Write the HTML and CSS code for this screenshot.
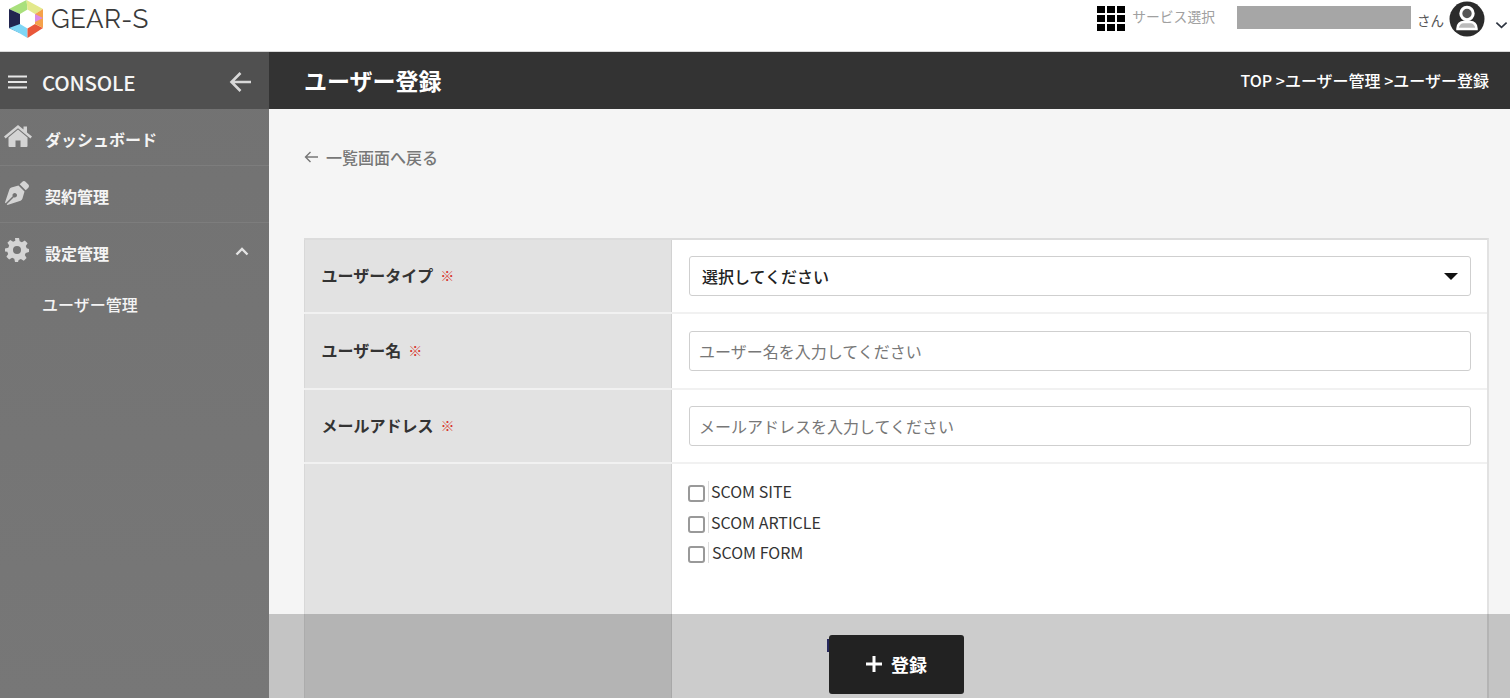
FILE: index.html
```html
<!DOCTYPE html>
<html lang="ja">
<head>
<meta charset="utf-8">
<title>ユーザー登録</title>
<link rel="stylesheet" href="styles.css">
</head>
<body>
<header class="topbar">
  <div class="brand">
    <svg class="logo" viewBox="0 0 35 38" width="35" height="38">
      <polygon points="0,9 17.500,0 18.500,9.500 11,14" fill="#a9e07c"/>
      <polygon points="17.500,0 34,9 26,14 18.500,9.500" fill="#e3e98c"/>
      <polygon points="0,9 11,14 11,33 0,28" fill="#22254f"/>
      <polygon points="11,24 18.500,28.500 18.500,38 11,33.500 0,28" fill="#7fd6f5"/>
      <polygon points="18.500,28.500 26,24 34,28 18.500,38" fill="#e9573a"/>
      <polygon points="26,14 34,9 34,28 26,24" fill="#f5a14a"/>
      <polygon points="26,14 34,18 26,22" fill="#d98ae8"/>
    </svg>
    <span class="brand-name">GEAR-S</span>
  </div>
  <div class="account">
    <div class="service">
      <svg class="grid-icon" viewBox="0 0 29 25" width="29" height="25" fill="#000">
        <rect x="0" y="0" width="8" height="7"/><rect x="10" y="0" width="8" height="7"/><rect x="20" y="0" width="8" height="7"/>
        <rect x="0" y="9" width="8" height="7"/><rect x="10" y="9" width="8" height="7"/><rect x="20" y="9" width="8" height="7"/>
        <rect x="0" y="18" width="8" height="7"/><rect x="10" y="18" width="8" height="7"/><rect x="20" y="18" width="8" height="7"/>
      </svg>
      <span class="service-label">サービス選択</span>
    </div>
    <div class="user-mask"></div>
    <span class="san">さん</span>
    <svg class="avatar" viewBox="0 0 36 36" width="36" height="36">
      <circle cx="18" cy="18" r="17.500" fill="#2b2b2b"/>
      <circle cx="18" cy="12.500" r="6.200" fill="#555" stroke="#fff" stroke-width="3"/>
      <path d="M8.500 27.500c0-4 3-6.500 6-6.500h7c3 0 6 2.500 6 6.500v.5h-19z" fill="#bbb" stroke="#fff" stroke-width="2.500"/>
    </svg>
    <svg class="caret" viewBox="0 0 14 8" width="13" height="8"><path d="M1.500 1.500 7 6.500l5.500-5" fill="none" stroke="#2d3440" stroke-width="1.800"/></svg>
  </div>
</header>

<div class="shell">
  <aside class="sidebar">
    <div class="console">
      <svg class="burger" viewBox="0 0 20 14" width="20" height="14"><path d="M0 1.500h19M0 7h19M0 12.500h19" stroke="#e6e6e6" stroke-width="2"/></svg>
      <span class="console-label">CONSOLE</span>
      <svg class="back" viewBox="0 0 24 22" width="24" height="22"><path d="M22 11H3M11.500 2 2.500 11l9 9" fill="none" stroke="#d8d8d8" stroke-width="2.600"/></svg>
    </div>
    <nav class="nav">
      <div class="nav-item">
        <svg class="nav-icon" viewBox="0 0 28 22" width="28" height="22" fill="#d4d4d4"><path d="M14 4.500 4.500 12.500V21a1 1 0 0 0 1 1h6v-6.500h5V22h6a1 1 0 0 0 1-1v-8.500z"/><path d="M14 0 0 11.500l1.600 2L14 3.200l12.400 10.300 1.600-2-5-4.100V1.500h-3.500v3z"/></svg>
        <span>ダッシュボード</span>
      </div>
      <div class="nav-item">
        <svg class="nav-icon pen" viewBox="0 0 512 512" width="24" height="24" fill="#d4d4d4"><path d="M136.600 138.790a64.003 64.003 0 0 0-43.310 41.350L0 460l14.690 14.690L164.800 324.580c-2.990-6.260-4.800-13.180-4.800-20.580 0-26.510 21.490-48 48-48s48 21.490 48 48-21.490 48-48 48c-7.400 0-14.320-1.810-20.580-4.800L37.310 497.310 52 512l279.860-93.290a64.003 64.003 0 0 0 41.350-43.310L416 224 288 96l-151.400 42.790zm361.340-64.620l-60.110-60.110c-18.750-18.750-49.160-18.750-67.910 0l-56.550 56.550 128.020 128.020 56.550-56.550c18.750-18.750 18.750-49.150 0-67.910z"/></svg>
        <span>契約管理</span>
      </div>
      <div class="nav-item nav-open">
        <svg class="nav-icon gear" viewBox="0 0 24 24" width="24" height="24" fill="#d4d4d4"><path fill-rule="evenodd" d="M10 0h4l.7 3.300 2.200.9L19.800 2.400l2.800 2.800-1.800 2.900.9 2.200L24 11v3l-3.300.9-.9 2.200 1.800 2.900-2.800 2.800-2.900-1.800-2.200.9L13 24h-3l-.7-3.300-2.200-.9-2.900 1.800-2.800-2.800 1.800-2.900-.9-2.200L0 13.500v-3l3.300-.7.9-2.200-1.800-2.900 2.800-2.800 2.900 1.800 2.200-.9zM12 8a4 4 0 1 0 0 8 4 4 0 0 0 0-8z"/></svg>
        <span>設定管理</span>
        <svg class="chev" viewBox="0 0 14 9" width="14" height="9"><path d="M1.500 7.500 7 2l5.500 5.500" fill="none" stroke="#e4e4e4" stroke-width="2.400"/></svg>
      </div>
      <div class="nav-sub">ユーザー管理</div>
    </nav>
  </aside>

  <main class="main">
    <div class="title-bar">
      <h1>ユーザー登録</h1>
      <div class="crumbs">TOP &gt;ユーザー管理 &gt;ユーザー登録</div>
    </div>
    <div class="content">
      <a class="back-link">
        <svg viewBox="0 0 14 12" width="14" height="12"><path d="M14 6H1.500M6.500 1 1.500 6l5 5" fill="none" stroke="#777" stroke-width="1.400"/></svg>
        一覧画面へ戻る
      </a>
      <div class="form">
        <div class="row row-type">
          <div class="label">ユーザータイプ<span class="req">※</span></div>
          <div class="field">
            <div class="select"><span>選択してください</span><i class="tri"></i></div>
          </div>
        </div>
        <div class="row row-name">
          <div class="label">ユーザー名<span class="req">※</span></div>
          <div class="field"><input class="input" placeholder="ユーザー名を入力してください"></div>
        </div>
        <div class="row row-mail">
          <div class="label">メールアドレス<span class="req">※</span></div>
          <div class="field"><input class="input" placeholder="メールアドレスを入力してください"></div>
        </div>
        <div class="row row-perm">
          <div class="label"></div>
          <div class="field checks">
            <label class="check"><i class="box"></i><span>SCOM SITE</span></label>
            <label class="check"><i class="box"></i><span>SCOM ARTICLE</span></label>
            <label class="check"><i class="box"></i><span class="shift">SCOM FORM</span></label>
          </div>
        </div>
      </div>
    </div>
    <div class="action-bar">
      <button class="submit">
        <svg class="plus" viewBox="0 0 16 16" width="16" height="16"><path d="M8 0v16M0 8h16" stroke="#fff" stroke-width="3"/></svg>
        <span>登録</span>
      </button>
    </div>
  </main>
</div>
</body>
</html>
```
FILE: styles.css
```css
* { box-sizing: border-box; }
html, body { margin: 0; height: 100%; overflow: hidden; }
body {
  font-family: "Noto Sans CJK JP", "Noto Sans", sans-serif;
  color: #333;
  background: #fff;
  display: flex;
  flex-direction: column;
}
.topbar {
  height: 52px;
  flex: none;
  display: flex;
  justify-content: space-between;
  background: #fff;
  border-bottom: 1px solid #d9d9d9;
}
.brand { display: flex; align-items: flex-start; padding-left: 9px; }
.logo { display: block; }
.brand-name {
  font-family: "Raleway", "Lato", "Noto Sans", sans-serif;
  font-size: 26px;
  line-height: 36px;
  color: #3a3a3a;
  margin-left: 7px;
  margin-top: 1px;
  letter-spacing: .3px;
}
.account { display: flex; align-items: flex-start; padding-right: 2px; }
.service { display: flex; align-items: flex-start; margin-top: 6px; }
.service-label { font-size: 13.800px; line-height: 20px; color: #a0a0a0; margin-left: 6px; }
.user-mask { width: 174px; height: 23px; background: #a6a6a6; margin: 6px 0 0 22px; }
.san { font-size: 13.500px; line-height: 20px; color: #555; margin: 10px 5px 0 6px; }
.avatar { margin-top: 1px; }
.caret { margin: 21px 0 0 10px; }

.shell { flex: 1; display: flex; min-height: 0; }
.sidebar {
  width: 269px;
  flex: none;
  background: linear-gradient(#727272, #777);
  color: #fff;
}
.console {
  height: 57px;
  display: flex;
  align-items: center;
  padding: 2px 16px 0 8px;
  background: #505050;
}
.console-label {
  flex: 1;
  font-size: 20.500px;
  font-weight: 500;
  margin-left: 14px;
  color: #f5f5f5;
  letter-spacing: -.2px;
}
.nav-item {
  height: 57px;
  display: flex;
  align-items: center;
  padding: 3px 20px 0 4px;
  border-bottom: 1px solid #7d7d7d;
  font-size: 16px;
  font-weight: 700;
  color: #f4f4f4;
}
.nav-item span { flex: 1; margin-left: 13px; }
.nav-icon { flex: none; margin-bottom: 6px; }
.pen { margin-left: 1px; margin-right: 3px; }
.gear { margin-left: 1px; margin-right: 3px; }
.chev { margin-bottom: 4px; }
.nav-open { border-bottom: 0; }
.nav-sub { font-size: 16px; font-weight: 500; color: #f4f4f4; padding: 12px 0 0 42px; line-height: 24px; }

.main {
  flex: 1;
  min-width: 0;
  position: relative;
  display: flex;
  flex-direction: column;
  background: #f5f5f5;
}
.title-bar {
  height: 57px;
  flex: none;
  display: flex;
  align-items: center;
  justify-content: space-between;
  padding: 0 21px 0 35px;
  background: #333;
  color: #fff;
}
.title-bar h1 { margin: 0 0 2px; font-size: 23px; font-weight: 700; }
.crumbs { font-size: 16px; font-weight: 500; margin-bottom: 2px; }
.content { flex: 1; padding: 37px 21px 0 35px; overflow: hidden; }
.back-link {
  display: flex;
  align-items: center;
  gap: 8px;
  height: 22px;
  font-size: 16px;
  font-weight: 500;
  color: #777;
}
.form { margin-top: 70px; border-top: 2px solid #dcdcdc; border-right: 2px solid #e2e2e2; background: #fff; }
.row { display: flex; border-bottom: 2px solid #f1f1f1; }
.row-type { height: 74px; }
.row-name { height: 76px; }
.row-mail { height: 74px; }
.row-perm { height: 240px; border-bottom: 0; }
.label {
  width: 368px;
  flex: none;
  display: flex;
  align-items: center;
  padding: 0 0 2px 16.500px;
  background: #e2e2e2;
  border-right: 1px solid #d2d2d2;
  border-left: 1px solid #d8d8d8;
  font-size: 16px;
  font-weight: 700;
  color: #333;
}
.req { color: #d8342c; font-size: 14px; margin-left: 7px; font-weight: 700; }
.field { flex: 1; padding: 16px 16px 0 17px; }
.row-name .field { padding-top: 17px; }
.select, .input {
  display: block;
  width: 100%;
  height: 40px;
  background: #fff;
  border: 1px solid #cfcfcf;
  border-radius: 3px;
  font-family: inherit;
}
.select {
  display: flex;
  align-items: center;
  justify-content: space-between;
  padding: 0 12px;
  font-size: 16px;
  font-weight: 500;
  color: #222;
}
.tri { width: 0; height: 0; border: 7px solid transparent; border-top: 7px solid #111; border-bottom: 0; }
.input { padding: 0 9px; font-size: 16px; }
.input::placeholder { color: #777; opacity: 1; }
.checks { padding-top: 14px; }
.check { display: flex; height: 30.500px; font-size: 16px; color: #333; }
.check span { border-left: 1px solid #ddd; padding-left: 2px; height: 21px; margin-top: 3px; line-height: 21px; }
.check .shift { padding-left: 3px; }
.box {
  width: 17px;
  height: 17px;
  margin: 7px 3px 0 -1px;
  border: 2px solid #999;
  border-radius: 3px;
  background: #fff;
}
.action-bar {
  position: absolute;
  left: 0;
  right: 0;
  bottom: 0;
  height: 84px;
  background: rgba(0, 0, 0, .2);
  padding: 21px 0 0 560px;
}
.action-bar::before {
  content: "";
  position: absolute;
  left: 558px;
  top: 25px;
  width: 2px;
  height: 13px;
  background: #26285c;
}
.submit {
  display: flex;
  align-items: center;
  justify-content: center;
  gap: 9px;
  width: 135px;
  height: 59px;
  padding: 0 0 2px;
  border: 0;
  border-radius: 3px;
  background: #222;
  color: #fff;
  font-family: inherit;
  font-size: 18px;
  font-weight: 700;
}
```
